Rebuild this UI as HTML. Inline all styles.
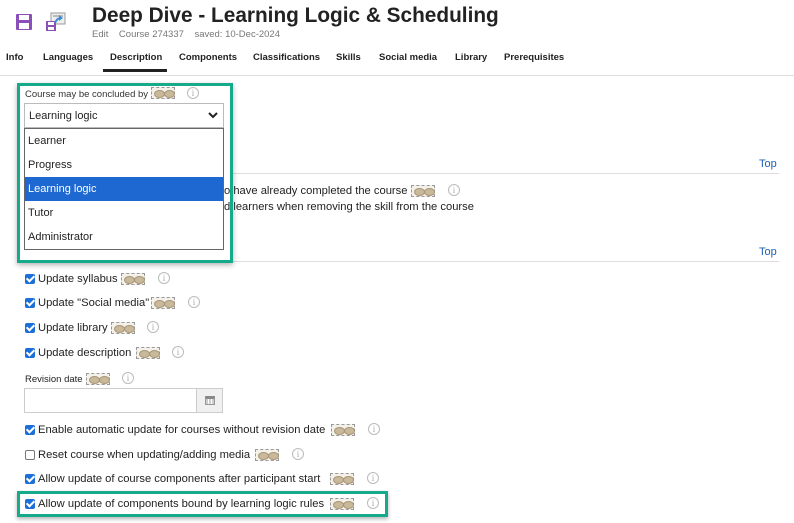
<!DOCTYPE html>
<html><head><meta charset="utf-8"><style>
*{margin:0;padding:0;box-sizing:border-box}
body{width:794px;height:523px;background:#fff;position:relative;overflow:hidden;font-family:"Liberation Sans",sans-serif;color:#222}
.a{position:absolute;white-space:nowrap}
.tab{position:absolute;top:52px;font-size:9.5px;font-weight:bold;color:#222}
.eye{position:absolute;width:24px;height:12px;border:1px dashed #999;background:#f4f1ea}
.eye:before,.eye:after{content:"";position:absolute;top:2px;width:9px;height:6px;border-radius:50%;background:#c9b99a;border:1px solid #a89677}
.eye:before{left:2px}.eye:after{left:12px}
.inf{position:absolute;width:12px;height:12px;border:1px solid #bbb;border-radius:50%;color:#aaa;font-size:9px;line-height:10px;text-align:center;font-family:"Liberation Serif",serif}
.cb{position:absolute;width:10px;height:10px;border-radius:2px;background:#1c6fd6}
.cb:after{content:"";position:absolute;left:3px;top:0px;width:3px;height:6px;border:solid #fff;border-width:0 2px 2px 0;transform:rotate(45deg)}
.cb.off{background:#fff;border:1px solid #777}.cb.off:after{display:none}
.lbl{position:absolute;font-size:11.2px;color:#222;white-space:nowrap}
.hr{position:absolute;height:1px;background:#ddd}
.top{position:absolute;left:759px;font-size:11px;color:#1a5fb4}
.dd{position:absolute;left:25px;width:198px;height:24px;font-size:11px;padding:6px 3px;color:#222}
</style></head><body>
<svg class="a" style="left:15px;top:13px" width="18" height="18" viewBox="0 0 18 18"><rect x="1" y="1" width="16" height="16" rx="1" fill="#8a4fb8"/><rect x="4" y="2" width="10" height="5" fill="#fff"/><rect x="4" y="10" width="10" height="6" fill="#fff"/></svg>
<svg class="a" style="left:45px;top:12px" width="22" height="20" viewBox="0 0 22 20"><rect x="6" y="1" width="14" height="11" fill="#eee" stroke="#999"/><rect x="8" y="3" width="10" height="2" fill="#bbb"/><rect x="1" y="9" width="10" height="10" fill="#8a4fb8"/><rect x="3" y="10" width="6" height="3" fill="#fff"/><rect x="3" y="15" width="6" height="3" fill="#fff"/><path d="M10 11 Q12 6 16 6" stroke="#3a8ad6" stroke-width="2" fill="none"/><path d="M14 3 L18 6 L14 9Z" fill="#3a8ad6"/></svg>
<div class="a" style="left:92px;top:4px;font-size:20.8px;font-weight:bold;color:#222">Deep Dive - Learning Logic &amp; Scheduling</div>
<div class="a" style="left:92px;top:29px;font-size:9.5px;color:#777">Edit &nbsp;&nbsp;&nbsp;Course 274337 &nbsp;&nbsp;&nbsp;saved: 10-Dec-2024</div>
<div class="tab" style="left:6px">Info</div>
<div class="tab" style="left:43px">Languages</div>
<div class="tab" style="left:110px">Description</div>
<div class="tab" style="left:179px">Components</div>
<div class="tab" style="left:253px">Classifications</div>
<div class="tab" style="left:336px">Skills</div>
<div class="tab" style="left:379px">Social media</div>
<div class="tab" style="left:455px">Library</div>
<div class="tab" style="left:504px">Prerequisites</div>
<div class="a" style="left:103px;top:69px;width:64px;height:3px;background:#222"></div>
<div class="hr" style="left:0;top:75px;width:794px"></div>

<div class="top" style="top:158px">Top</div>
<div class="hr" style="left:230px;top:173px;width:549px"></div>
<div class="eye" style="left:411px;top:185px"></div><div class="inf" style="left:448px;top:184px">i</div>
<div class="a" style="left:25px;top:244px;font-size:13px;font-weight:bold">System settings</div>
<div class="top" style="top:246px">Top</div>
<div class="hr" style="left:17px;top:261px;width:762px"></div>

<div class="cb" style="left:25px;top:274px"></div><div class="lbl" style="left:38px;top:273px">Update syllabus</div><div class="eye" style="left:121px;top:273px"></div><div class="inf" style="left:158px;top:272px">i</div>
<div class="cb" style="left:25px;top:298px"></div><div class="lbl" style="left:38px;top:297px">Update "Social media"</div><div class="eye" style="left:151px;top:297px"></div><div class="inf" style="left:188px;top:296px">i</div>
<div class="cb" style="left:25px;top:323px"></div><div class="lbl" style="left:38px;top:322px">Update library</div><div class="eye" style="left:111px;top:322px"></div><div class="inf" style="left:147px;top:321px">i</div>
<div class="cb" style="left:25px;top:348px"></div><div class="lbl" style="left:38px;top:347px">Update description</div><div class="eye" style="left:136px;top:347px"></div><div class="inf" style="left:172px;top:346px">i</div>

<div class="lbl" style="left:25px;top:374px;font-size:9.5px">Revision date</div><div class="eye" style="left:86px;top:373px"></div><div class="inf" style="left:122px;top:372px">i</div>
<div class="a" style="left:24px;top:388px;width:173px;height:25px;border:1px solid #ccc"></div>
<div class="a" style="left:196px;top:388px;width:27px;height:25px;border:1px solid #ccc;background:#f0f0f0"><div style="position:absolute;left:8px;top:7px;width:10px;height:9px;border:1px solid #999;border-top:3px solid #888;background:repeating-linear-gradient(90deg,#ccc 0 2px,#fff 2px 3px)"></div></div>

<div class="cb" style="left:25px;top:425px"></div><div class="lbl" style="left:38px;top:424px">Enable automatic update for courses without revision date</div><div class="eye" style="left:331px;top:424px"></div><div class="inf" style="left:368px;top:423px">i</div>
<div class="cb off" style="left:25px;top:450px"></div><div class="lbl" style="left:38px;top:449px">Reset course when updating/adding media</div><div class="eye" style="left:255px;top:449px"></div><div class="inf" style="left:292px;top:448px">i</div>
<div class="cb" style="left:25px;top:474px"></div><div class="lbl" style="left:38px;top:473px">Allow update of course components after participant start</div><div class="eye" style="left:330px;top:473px"></div><div class="inf" style="left:367px;top:472px">i</div>
<div class="cb" style="left:25px;top:499px"></div><div class="lbl" style="left:38px;top:498px">Allow update of components bound by learning logic rules</div><div class="eye" style="left:330px;top:498px"></div><div class="inf" style="left:367px;top:497px">i</div>
<div class="a" style="left:17px;top:491px;width:371px;height:26px;border:3px solid #15aa8a;box-shadow:0 2px 4px rgba(0,0,0,.3)"></div>

<div class="a" style="left:17px;top:83px;width:216px;height:180px;border:3px solid #15aa8a;background:#fff;box-shadow:0 2px 5px rgba(0,0,0,.3)"></div>
<div class="lbl" style="left:224px;top:185px">o have already completed the course</div>
<div class="lbl" style="left:224px;top:201px">d learners when removing the skill from the course</div>
<div class="a" style="left:230px;top:180px;width:3px;height:35px;background:#15aa8a"></div>
<div class="lbl" style="left:25px;top:89px;font-size:9.5px;color:#333">Course may be concluded by</div>
<div class="eye" style="left:151px;top:87px"></div><div class="inf" style="left:187px;top:87px">i</div>
<div class="a" style="left:24px;top:103px;width:200px;height:25px;border:1px solid #bbb;font-size:11px;padding:6px 4px;background:#fff">Learning logic<svg style="position:absolute;right:5px;top:8px" width="10" height="7" viewBox="0 0 10 7"><path d="M1 1 L5 5 L9 1" stroke="#222" stroke-width="2" fill="none"/></svg></div>
<div class="a" style="left:24px;top:128px;width:200px;height:122px;border:1px solid #666;background:#fff"></div>
<div class="dd" style="top:129px">Learner</div>
<div class="dd" style="top:153px">Progress</div>
<div class="dd" style="top:177px;background:#1e68d2;color:#fff">Learning logic</div>
<div class="dd" style="top:201px">Tutor</div>
<div class="dd" style="top:225px">Administrator</div>
</body></html>
